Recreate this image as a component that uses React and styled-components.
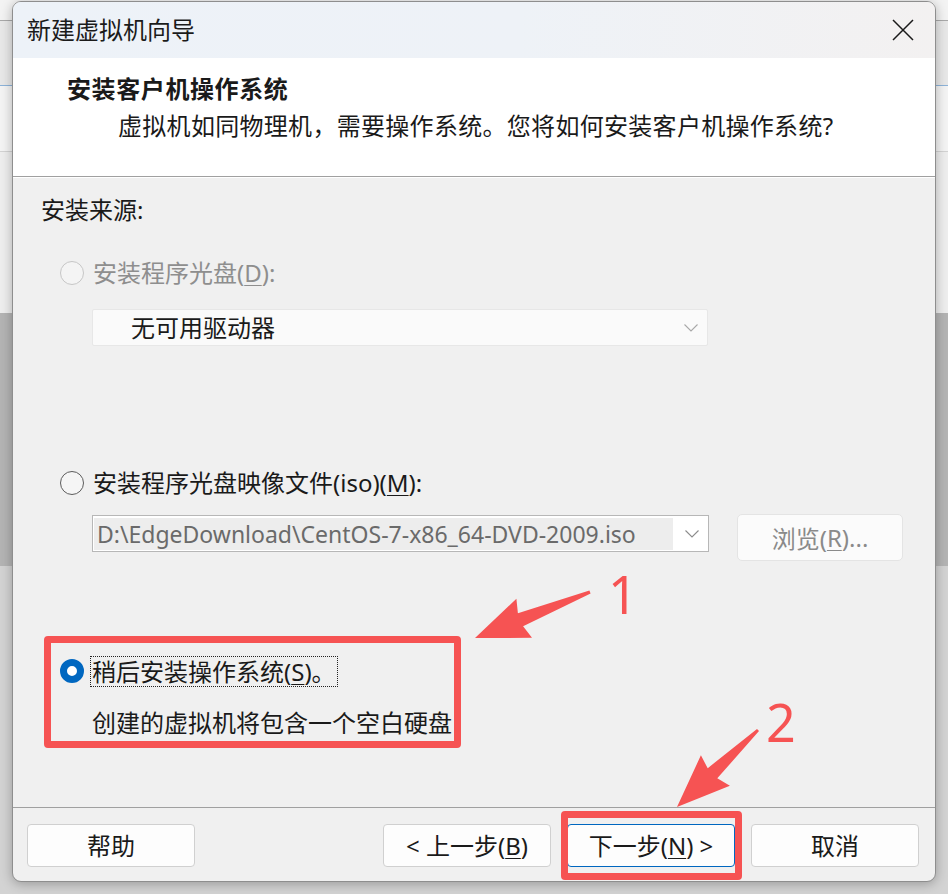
import styled, { createGlobalStyle, css } from 'styled-components';

const GlobalStyle = createGlobalStyle`
  html, body {
    margin: 0;
    padding: 0;
  }
  body {
    font-family: "Noto Sans", "Noto Sans CJK SC", sans-serif;
    background: #d2d2d2;
    overflow: hidden;
  }
`;

const Screen = styled.div`
  position: relative;
  width: 948px;
  height: 894px;
  box-sizing: border-box;
  padding: 1px 12px 0;
  overflow: hidden;
  background: linear-gradient(
    to bottom,
    #f3f3f3 0 20px,
    #a9a9a9 20px 21px,
    #e8e8e8 21px 85px,
    #8db3d9 85px 86px,
    #f4f4f4 86px 151px,
    #d3d3d3 151px 152px,
    #eeeeee 152px 313px,
    #b4b4b4 313px 566px,
    #d3d3d3 566px
  );
`;

const Dialog = styled.div`
  width: 924px;
  height: 881px;
  box-sizing: border-box;
  border: 1px solid #8e8e8e;
  border-radius: 9px;
  overflow: hidden;
  background: #f0f0f0;
  display: flex;
  flex-direction: column;
  box-shadow: 0 2px 12px rgba(0, 0, 0, 0.28);
  color: #1a1a1a;
  font-size: 24px;
`;

const TitleBar = styled.div`
  height: 56px;
  flex-shrink: 0;
  display: flex;
  align-items: center;
  justify-content: space-between;
  padding: 0 21px 0 14px;
  background: linear-gradient(90deg, #edf2f8 0%, #eef2f7 55%, #f3f1f1 100%);
`;

const TitleText = styled.span`
  font-size: 24px;
  line-height: 30px;
  color: #1b1b1b;
`;

const CloseButton = styled.span`
  display: flex;
  width: 22px;
  height: 22px;
`;

const Header = styled.div`
  height: 119px;
  flex-shrink: 0;
  box-sizing: border-box;
  background: #fff;
  border-bottom: 1px solid #a0a0a0;
  padding: 16px 0 0 54px;
`;

const HeaderTitle = styled.div`
  font-weight: 700;
  line-height: 30px;
  letter-spacing: 0.6px;
`;

const HeaderSub = styled.div`
  margin: 7px 0 0 51px;
  line-height: 30px;
  letter-spacing: 0.3px;
`;

const Body = styled.div`
  flex: 1;
  border-top: 1px solid #fff;
  padding: 17px 0 0 28px;
`;

const SectionLabel = styled.div`
  line-height: 30px;
`;

const OptionRow = styled.label`
  display: flex;
  align-items: center;
  gap: 9px;
  height: 30px;
  margin: ${p => p.$top}px 0 0 19px;
  color: ${p => (p.$disabled ? '#8e8e8e' : '#1a1a1a')};
  line-height: 30px;
`;

const Radio = styled.span`
  width: 24px;
  height: 24px;
  flex-shrink: 0;
  box-sizing: border-box;
  border-radius: 50%;
  border: 1.5px solid ${p => (p.$disabled ? '#c6c6c6' : '#5c5c5c')};
  background: ${p => (p.$disabled ? '#f4f4f4' : '#f5f5f5')};
  ${p =>
    p.$checked &&
    css`
      border: 7px solid #0067c0;
      background: #fff;
    `}
`;

const Mnemonic = styled.u`
  text-decoration-thickness: 1px;
  text-underline-offset: 3px;
`;

const DriveCombo = styled.div`
  width: 616px;
  height: 37px;
  box-sizing: border-box;
  margin: 21px 0 0 51px;
  display: flex;
  align-items: center;
  justify-content: space-between;
  padding: 0 9px 0 38px;
  background: #fafafa;
  border: 1px solid #e7e7e7;
  border-radius: 2px;
  line-height: 30px;
`;

const IsoRow = styled.div`
  display: flex;
  align-items: flex-start;
  gap: 28px;
  margin: 16px 0 0 51px;
`;

const IsoCombo = styled.div`
  width: 617px;
  height: 37px;
  margin-top: 1px;
  box-sizing: border-box;
  display: flex;
  align-items: center;
  padding: 1px 9px 1px 1px;
  background: #fff;
  border: 1px solid #b7b7b7;
`;

const IsoField = styled.div`
  width: 579px;
  height: 32px;
  margin-right: 12px;
  padding-left: 3px;
  box-sizing: border-box;
  background: #ededed;
  color: #6a6a6a;
  font-size: 23px;
  line-height: 32px;
  white-space: nowrap;
  overflow: hidden;
`;

const Chevron = styled.svg`
  width: 14px;
  height: 8px;
  flex-shrink: 0;
`;

const BrowseButton = styled.div`
  width: 166px;
  height: 47px;
  box-sizing: border-box;
  display: flex;
  align-items: center;
  justify-content: center;
  background: #fbfbfb;
  border: 1px solid #e4e4e4;
  border-radius: 5px;
  color: #8a8a8a;
`;

const LaterGroup = styled.div`
  position: relative;
  margin: 95px 0 0 19px;
  width: 400px;
  white-space: nowrap;

  &::after {
    content: '';
    position: absolute;
    left: -16px;
    top: -20px;
    width: 417px;
    height: 112px;
    box-sizing: border-box;
    border: 7px solid #f65353;
    border-radius: 4px;
  }
`;

const LaterRow = styled.div`
  display: flex;
  align-items: center;
  gap: 6px;
  height: 30px;
`;

const FocusLabel = styled.span`
  border: 1px dotted #222;
  padding: 0 1px;
  line-height: 29px;
`;

const Description = styled.div`
  margin-top: 22px;
  padding-left: 32px;
  line-height: 30px;
`;

const Footer = styled.div`
  height: 74px;
  flex-shrink: 0;
  box-sizing: border-box;
  border-top: 1px solid #a0a0a0;
  display: flex;
  align-items: flex-start;
  gap: 16px;
  padding: 16px 16px 0 14px;
`;

const Button = styled.div`
  position: relative;
  width: 168px;
  height: 43px;
  box-sizing: border-box;
  display: flex;
  align-items: center;
  justify-content: center;
  background: #fdfdfd;
  border: 1px solid ${p => (p.$primary ? '#0067c0' : '#d0d0d0')};
  border-radius: 4px;
  margin-left: ${p => (p.$push ? 'auto' : '0')};
  line-height: 30px;
  white-space: pre;

  ${p =>
    p.$marked &&
    css`
      &::after {
        content: '';
        position: absolute;
        left: -7px;
        right: -8px;
        top: -14px;
        bottom: -14px;
        border: 7px solid #f65353;
        border-radius: 4px;
      }
    `}
`;

const Overlay = styled.svg`
  position: absolute;
  left: 0;
  top: 0;
  width: 948px;
  height: 894px;
  pointer-events: none;
`;

const Callout = styled.span`
  position: absolute;
  left: ${p => p.$x}px;
  top: ${p => p.$y}px;
  font-family: "Noto Sans", sans-serif;
  font-size: 52px;
  line-height: 1;
  color: #f65353;
`;

// arrow polygon from tail to tip, head a little barbed like the screenshot tool
const arrowPoints = (tail, tip, head = 53, half = 21, neck = 7, tailHalf = 1.5) => {
  const dx = tip[0] - tail[0];
  const dy = tip[1] - tail[1];
  const len = Math.hypot(dx, dy);
  const ux = dx / len;
  const uy = dy / len;
  const px = -uy;
  const py = ux;
  const at = (back, side) => [tip[0] - ux * back + px * side, tip[1] - uy * back + py * side];
  const pts = [
    tip,
    at(head, half),
    at(head - 4, neck),
    [tail[0] + px * tailHalf, tail[1] + py * tailHalf],
    [tail[0] - px * tailHalf, tail[1] - py * tailHalf],
    at(head - 4, -neck),
    at(head, -half),
  ];
  return pts.map(p => p.map(v => v.toFixed(1)).join(',')).join(' ');
};

const ChevronIcon = ({ color = '#8c8c8c' }) => (
  <Chevron viewBox="0 0 14 8">
    <polyline points="0.5,0.5 7,7 13.5,0.5" fill="none" stroke={color} strokeWidth="1.1" />
  </Chevron>
);

const App = () => {
  return (
    <Screen>
      <GlobalStyle />
      <Dialog>
        <TitleBar>
          <TitleText>新建虚拟机向导</TitleText>
          <CloseButton>
            <svg viewBox="0 0 22 22" width="22" height="22">
              <path d="M1 1 L21 21 M21 1 L1 21" stroke="#1a1a1a" strokeWidth="1.5" fill="none" />
            </svg>
          </CloseButton>
        </TitleBar>

        <Header>
          <HeaderTitle>安装客户机操作系统</HeaderTitle>
          <HeaderSub>虚拟机如同物理机，需要操作系统。您将如何安装客户机操作系统?</HeaderSub>
        </Header>

        <Body>
          <SectionLabel>安装来源:</SectionLabel>

          <OptionRow $top={33} $disabled>
            <Radio $disabled />
            <span>
              安装程序光盘(<Mnemonic>D</Mnemonic>):
            </span>
          </OptionRow>
          <DriveCombo>
            <span>无可用驱动器</span>
            <ChevronIcon color="#a8a8a8" />
          </DriveCombo>

          <OptionRow $top={122}>
            <Radio />
            <span>
              安装程序光盘映像文件(iso)(<Mnemonic>M</Mnemonic>):
            </span>
          </OptionRow>
          <IsoRow>
            <IsoCombo>
              <IsoField>D:\EdgeDownload\CentOS-7-x86_64-DVD-2009.iso</IsoField>
              <ChevronIcon color="#8c8c8c" />
            </IsoCombo>
            <BrowseButton>
              浏览(<Mnemonic>R</Mnemonic>)...
            </BrowseButton>
          </IsoRow>

          <LaterGroup>
            <LaterRow>
              <Radio $checked />
              <FocusLabel>
                稍后安装操作系统(<Mnemonic>S</Mnemonic>)。
              </FocusLabel>
            </LaterRow>
            <Description>创建的虚拟机将包含一个空白硬盘</Description>
          </LaterGroup>
        </Body>

        <Footer>
          <Button>帮助</Button>
          <Button $push>
            {'< 上一步('}
            <Mnemonic>B</Mnemonic>
            {')'}
          </Button>
          <Button $primary $marked>
            {'下一步('}
            <Mnemonic>N</Mnemonic>
            {') >'}
          </Button>
          <Button>取消</Button>
        </Footer>
      </Dialog>

      <Overlay viewBox="0 0 948 894">
        <polygon points={arrowPoints([590, 592], [475, 638])} fill="#f65353" />
        <polygon points={arrowPoints([758, 730], [677, 807])} fill="#f65353" />
      </Overlay>
      <Callout $x={608} $y={568}>1</Callout>
      <Callout $x={766} $y={696}>2</Callout>
    </Screen>
  );
};

export default App;
